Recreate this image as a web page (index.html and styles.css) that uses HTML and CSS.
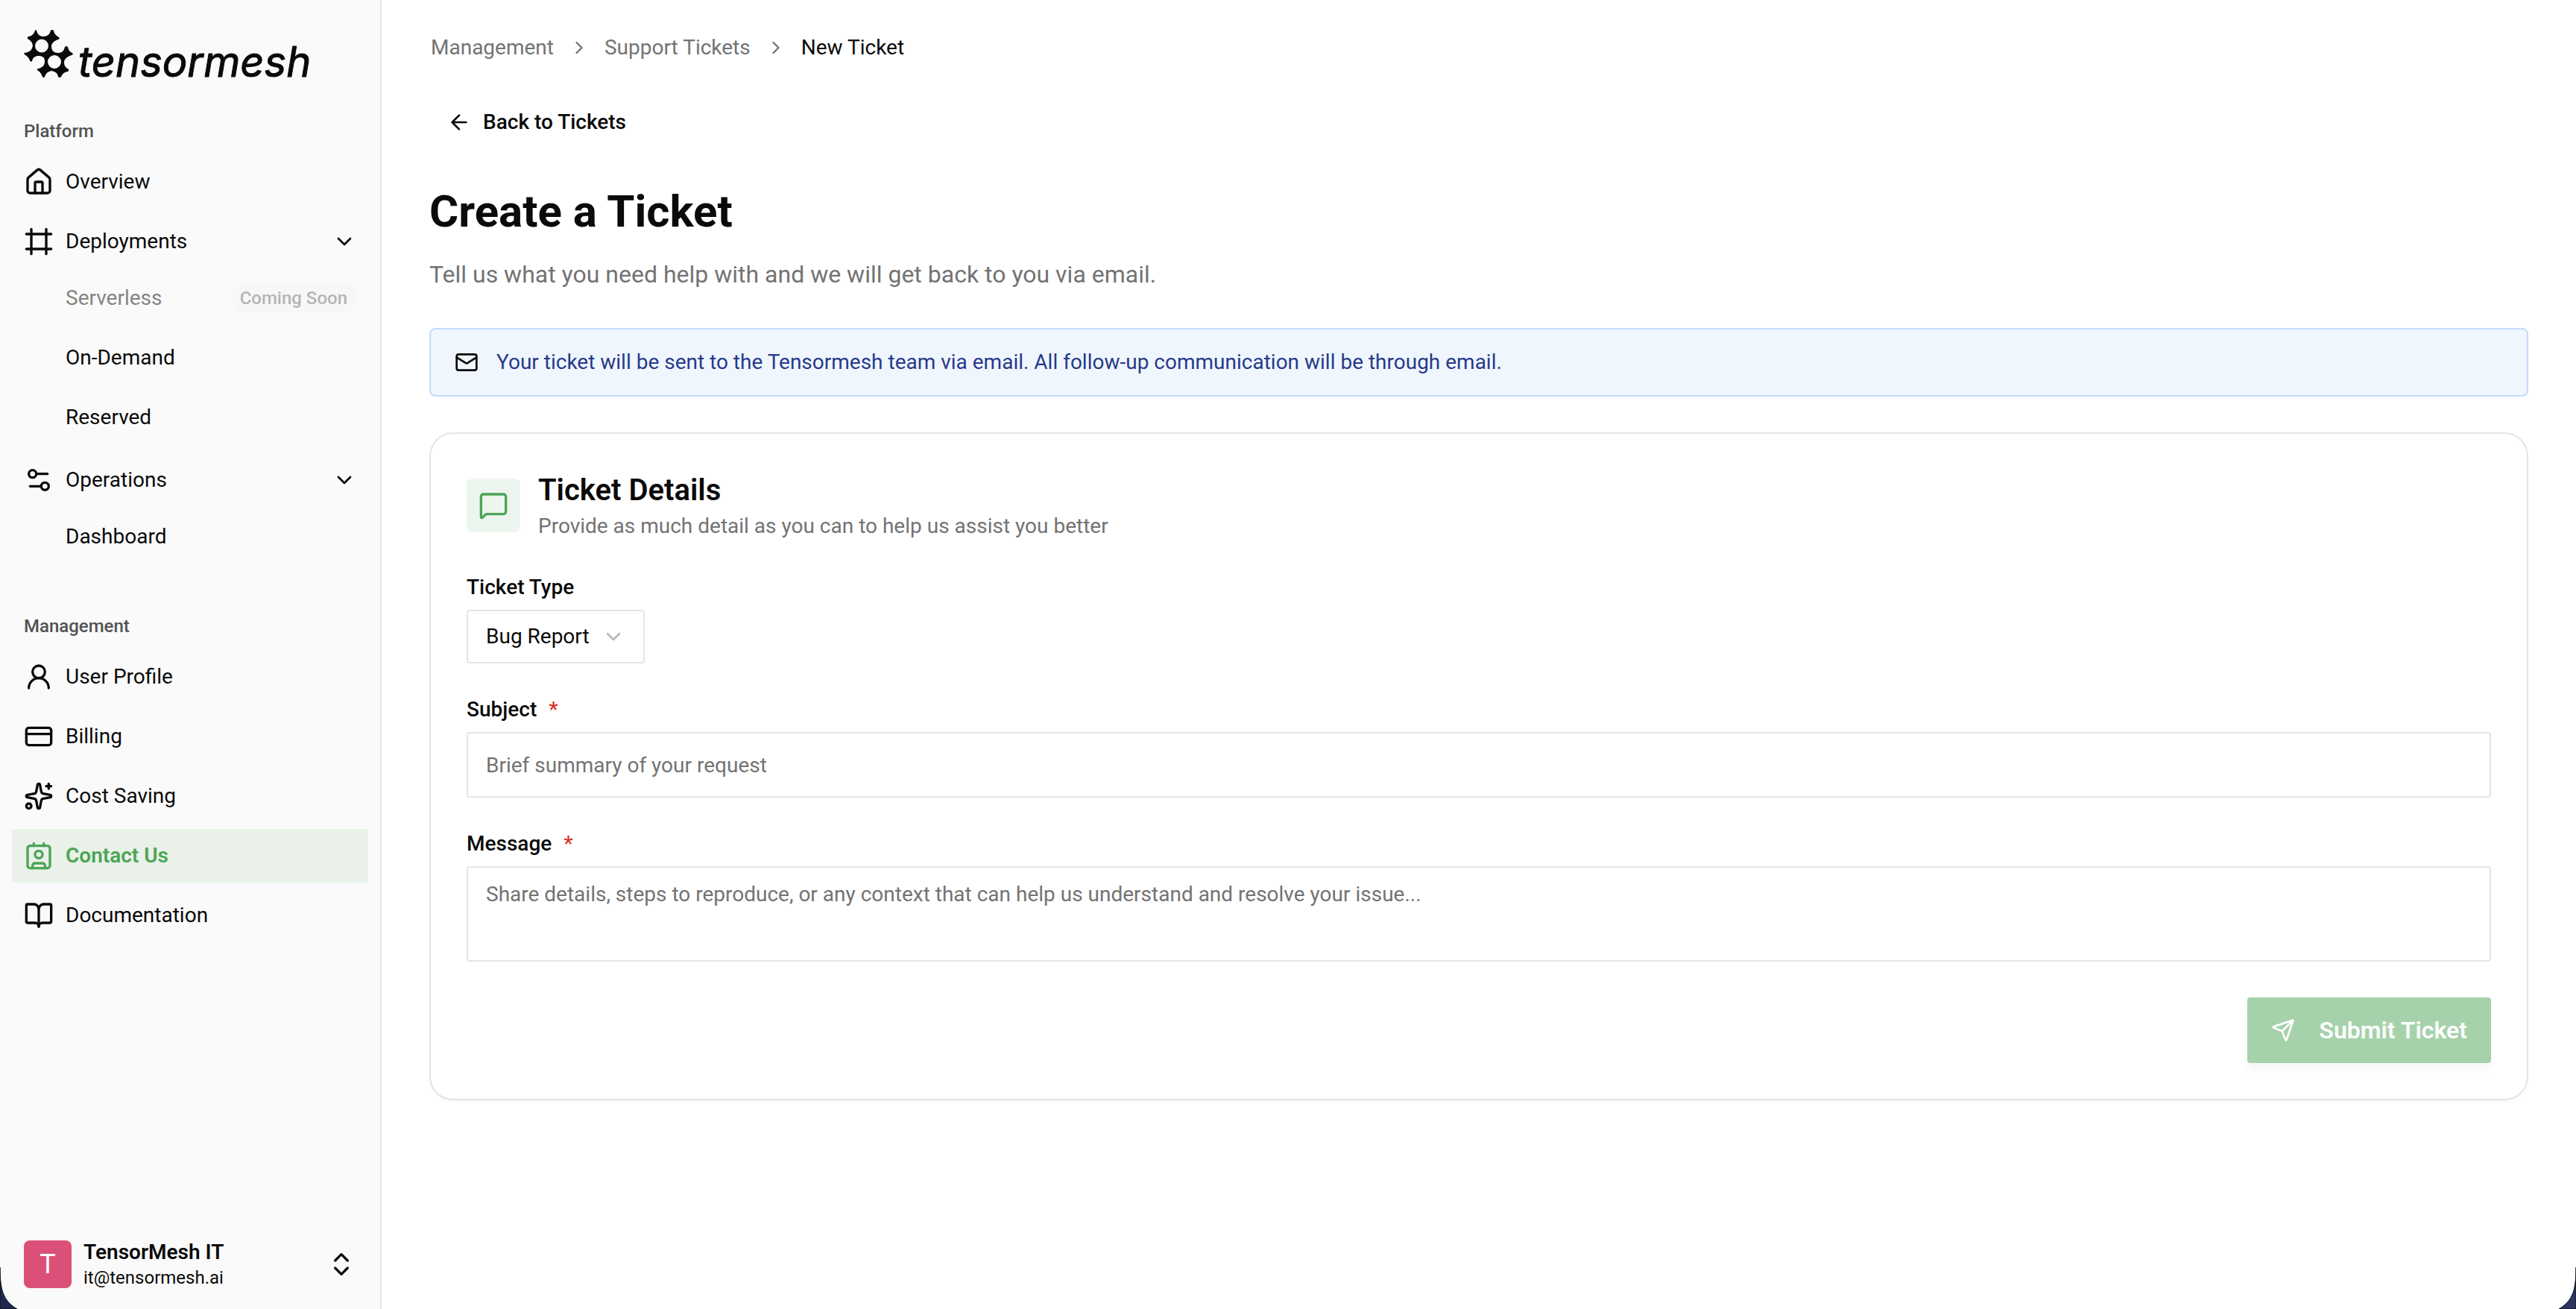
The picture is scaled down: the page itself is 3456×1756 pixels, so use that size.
FILE: index.html
```html
<!DOCTYPE html>
<html lang="en">
<head>
<meta charset="utf-8">
<meta name="viewport" content="width=device-width, initial-scale=1.0">
<title>New Ticket — Tensormesh</title>
<link rel="stylesheet" href="styles.css">
</head>
<body>
<div class="app">
  <aside class="sidebar">
    <a class="logo" href="#" aria-label="tensormesh">
      <svg viewBox="0 0 390 72" width="390" height="72">
        <path fill-rule="evenodd" d="M17 1Q19 9 26 9Q34 9 36 1Q38-1 40 1Q41 7 47 10Q49 12 46 13C40 15 37 18 37 23C37 28 41 31 46 31C51 31 54 28 55 23Q57 21 59 23Q60 29 65 31Q67 33 64 34C58 36 54 39 54 44Q54 50 60 53Q61 55 59 56Q52 57 50 63Q48 65 46 63Q45 56 37 55Q30 56 28 63Q26 65 25 63Q23 57 18 54Q17 52 20 52C26 50 28 47 28 42C28 37 25 35 20 35C15 35 12 37 11 42Q9 44 8 41Q6 36 1 33Q-1 32 1 31C8 30 11 27 12 21Q11 15 5 12Q4 10 6 9Q13 8 15 1Q16-1 17 1ZM24 12.500A9 9 0 1 0 24 30.500A9 9 0 1 0 24 12.500ZM41 34A9 9 0 1 0 41 52A9 9 0 1 0 41 34Z"/>
        <text class="wordmark" x="73" y="63">tensormesh</text>
      </svg>
    </a>

    <nav class="nav">
      <section class="nav-group">
        <h2 class="nav-label">Platform</h2>
        <a class="nav-item" href="#">
          <svg class="icon icon-lg" viewBox="0 0 24 24"><path d="M15 21v-8a1 1 0 0 0-1-1h-4a1 1 0 0 0-1 1v8"/><path d="M3 10a2 2 0 0 1 .709-1.528l7-5.999a2 2 0 0 1 2.582 0l7 5.999A2 2 0 0 1 21 10v9a2 2 0 0 1-2 2H5a2 2 0 0 1-2-2z"/></svg>
          Overview
        </a>
        <button class="nav-item" type="button">
          <svg class="icon icon-lg" viewBox="0 0 24 24"><path d="M22 6H2M22 18H2M6 2v20M18 2v20"/></svg>
          Deployments
          <svg class="icon icon-md push" viewBox="0 0 24 24"><path d="m6 9 6 6 6-6"/></svg>
        </button>
        <div class="nav-sub">
          <a class="nav-item disabled" aria-disabled="true">Serverless <span class="badge push">Coming Soon</span></a>
          <a class="nav-item" href="#">On-Demand</a>
          <a class="nav-item" href="#">Reserved</a>
        </div>
        <button class="nav-item" type="button">
          <svg class="icon icon-lg" viewBox="0 0 24 24"><path d="M14 17H5M19 7h-9"/><circle cx="17" cy="17" r="3"/><circle cx="7" cy="7" r="3"/></svg>
          Operations
          <svg class="icon icon-md push" viewBox="0 0 24 24"><path d="m6 9 6 6 6-6"/></svg>
        </button>
        <div class="nav-sub">
          <a class="nav-item" href="#">Dashboard</a>
        </div>
      </section>

      <section class="nav-group">
        <h2 class="nav-label">Management</h2>
        <a class="nav-item" href="#">
          <svg class="icon icon-lg" viewBox="0 0 24 24"><circle cx="12" cy="8" r="5"/><path d="M20 21a8 8 0 0 0-16 0"/></svg>
          User Profile
        </a>
        <a class="nav-item" href="#">
          <svg class="icon icon-lg" viewBox="0 0 24 24"><rect x="2" y="5" width="20" height="14" rx="2"/><path d="M2 10h20"/></svg>
          Billing
        </a>
        <a class="nav-item" href="#">
          <svg class="icon icon-lg" viewBox="0 0 24 24"><path d="M11.017 2.814a1 1 0 0 1 1.966 0l1.051 5.558a2 2 0 0 0 1.594 1.594l5.558 1.051a1 1 0 0 1 0 1.966l-5.558 1.051a2 2 0 0 0-1.594 1.594l-1.051 5.558a1 1 0 0 1-1.966 0l-1.051-5.558a2 2 0 0 0-1.594-1.594l-5.558-1.051a1 1 0 0 1 0-1.966l5.558-1.051a2 2 0 0 0 1.594-1.594z"/><path d="M20 2v4M22 4h-4"/><circle cx="4" cy="20" r="2"/></svg>
          Cost Saving
        </a>
        <a class="nav-item active" href="#" aria-current="page">
          <svg class="icon icon-lg" viewBox="0 0 24 24"><path d="M16 2v2M8 2v2"/><path d="M7 22v-2a2 2 0 0 1 2-2h6a2 2 0 0 1 2 2v2"/><circle cx="12" cy="11" r="3"/><rect x="3" y="4" width="18" height="18" rx="2"/></svg>
          Contact Us
        </a>
        <a class="nav-item" href="#">
          <svg class="icon icon-lg" viewBox="0 0 24 24"><path d="M12 7v14"/><path d="M3 18a1 1 0 0 1-1-1V4a1 1 0 0 1 1-1h5a4 4 0 0 1 4 4 4 4 0 0 1 4-4h5a1 1 0 0 1 1 1v13a1 1 0 0 1-1 1h-6a3 3 0 0 0-3 3 3 3 0 0 0-3-3z"/></svg>
          Documentation
        </a>
      </section>
    </nav>

    <button class="account" type="button">
      <span class="avatar">T</span>
      <span class="account-text">
        <span class="account-name">TensorMesh IT</span>
        <span class="account-email">it@tensormesh.ai</span>
      </span>
      <svg class="icon icon-lg push" viewBox="0 0 24 24"><path d="m7 15 5 5 5-5M7 9l5-5 5 5"/></svg>
    </button>
  </aside>

  <main class="main">
    <nav class="breadcrumb" aria-label="Breadcrumb">
      <a href="#">Management</a>
      <svg class="icon icon-sm" viewBox="0 0 24 24"><path d="m9 18 6-6-6-6"/></svg>
      <a href="#">Support Tickets</a>
      <svg class="icon icon-sm" viewBox="0 0 24 24"><path d="m9 18 6-6-6-6"/></svg>
      <span class="current" aria-current="page">New Ticket</span>
    </nav>

    <a class="back" href="#">
      <svg class="icon icon-md" viewBox="0 0 24 24"><path d="m12 19-7-7 7-7M19 12H5"/></svg>
      Back to Tickets
    </a>

    <h1 class="page-title">Create a Ticket</h1>
    <p class="page-subtitle">Tell us what you need help with and we will get back to you via email.</p>

    <div class="notice">
      <svg class="icon icon-md" viewBox="0 0 24 24"><rect x="2" y="4" width="20" height="16" rx="2"/><path d="m22 7-8.991 5.727a2 2 0 0 1-2.009 0L2 7"/></svg>
      <p>Your ticket will be sent to the Tensormesh team via email. All follow-up communication will be through email.</p>
    </div>

    <form class="card">
      <div class="card-header">
        <span class="card-icon">
          <svg class="icon icon-lg" viewBox="0 0 24 24"><path d="M22 17a2 2 0 0 1-2 2H6.828a2 2 0 0 0-1.414.586l-2.202 2.202A.71.71 0 0 1 2 21.286V5a2 2 0 0 1 2-2h16a2 2 0 0 1 2 2z"/></svg>
        </span>
        <div>
          <h2 class="card-title">Ticket Details</h2>
          <p class="card-desc">Provide as much detail as you can to help us assist you better</p>
        </div>
      </div>

      <div class="field">
        <label for="type">Ticket Type</label>
        <div class="select">
          <select id="type">
            <option selected>Bug Report</option>
          </select>
          <svg class="icon icon-md" viewBox="0 0 24 24"><path d="m6 9 6 6 6-6"/></svg>
        </div>
      </div>

      <div class="field">
        <label for="subject">Subject <span class="required">*</span></label>
        <input id="subject" type="text" placeholder="Brief summary of your request">
      </div>

      <div class="field">
        <label for="message">Message <span class="required">*</span></label>
        <textarea id="message" placeholder="Share details, steps to reproduce, or any context that can help us understand and resolve your issue..."></textarea>
      </div>

      <button class="submit" type="submit" disabled>
        <svg class="icon icon-md" viewBox="0 0 24 24"><path d="M14.536 21.686a.5.5 0 0 0 .937-.024l6.5-19a.496.496 0 0 0-.635-.635l-19 6.5a.5.5 0 0 0-.024.937l7.930 3.180a2 2 0 0 1 1.112 1.110z"/><path d="m21.854 2.147-10.940 10.939"/></svg>
        Submit Ticket
      </button>
    </form>
  </main>

  <svg class="corner corner-left" viewBox="0 0 24 56" width="24" height="56"><path d="M0 0C0 30 4 45 23 56H0z"/></svg>
  <svg class="corner corner-right" viewBox="0 0 24 56" width="24" height="56"><path d="M24 0C24 30 20 45 1 56H24z"/></svg>
</div>
</body>
</html>
```
FILE: styles.css
```css
:root {
  --text: #0a0a0a;
  --muted: #737373;
  --border: #e5e5e5;
  --green: #4ca555;
}
* {
  box-sizing: border-box;
}
body {
  margin: 0;
  font-family: Roboto, "Liberation Sans", sans-serif;
  font-size: 28px;
  line-height: 40px;
  color: var(--text);
  background: #fff;
}
h1, h2, p {
  margin: 0;
}
a {
  color: inherit;
  text-decoration: none;
}
button, input, select, textarea {
  font: inherit;
  color: inherit;
}
.app {
  position: relative;
  display: flex;
  min-height: 100vh;
}

/* icons */
.icon {
  flex: none;
  fill: none;
  stroke: currentColor;
  stroke-width: 2;
  stroke-linecap: round;
  stroke-linejoin: round;
}
.icon-sm { width: 28px; height: 28px; }
.icon-md { width: 32px; height: 32px; }
.icon-lg { width: 40px; height: 40px; }
.push { margin-left: auto; }

/* sidebar */
.sidebar {
  display: flex;
  flex: none;
  flex-direction: column;
  width: 512px;
  padding: 40px 16px 24px;
  background: #fafafa;
  border-right: 2px solid var(--border);
}
.logo {
  display: block;
  height: 104px;
  padding-left: 16px;
}
.logo svg {
  display: block;
  overflow: visible;
  fill: var(--text);
}
.wordmark {
  font-family: Inter, sans-serif;
  font-size: 56px;
  font-style: italic;
  stroke: var(--text);
  stroke-width: 1;
  stroke-linejoin: round;
}
.nav {
  display: flex;
  flex-direction: column;
  gap: 48px;
}
.nav-group {
  display: flex;
  flex-direction: column;
  gap: 8px;
}
.nav-label {
  height: 64px;
  margin-bottom: -8px;
  padding: 0 16px;
  font-size: 24px;
  font-weight: 500;
  line-height: 64px;
  color: #525252;
}
.nav-item {
  display: flex;
  align-items: center;
  gap: 16px;
  height: 72px;
  padding: 0 16px;
  border: 0;
  border-radius: 4px;
  background: none;
  text-align: left;
}
.nav-item.active {
  background: #e9f1e9;
  color: var(--green);
  font-weight: 600;
}
.nav-item.disabled {
  color: #848484;
}
.nav-sub {
  display: flex;
  flex-direction: column;
  gap: 8px;
  margin-top: -4px;
  padding-bottom: 4px;
}
.nav-sub .nav-item {
  padding-left: 72px;
}
.badge {
  padding: 0 12px;
  border-radius: 20px;
  background: #f7f7f7;
  font-size: 24px;
  font-weight: 500;
  color: #b5b5b5;
}
.account {
  display: flex;
  align-items: center;
  gap: 16px;
  height: 72px;
  margin-top: auto;
  padding: 0 16px;
  border: 0;
  background: none;
  text-align: left;
}
.avatar {
  width: 64px;
  height: 64px;
  border-radius: 8px;
  background: #db5079;
  color: #fff;
  font-size: 36px;
  line-height: 64px;
  text-align: center;
}
.account-text {
  display: flex;
  flex-direction: column;
}
.account-name {
  font-weight: 600;
  line-height: 36px;
}
.account-email {
  font-size: 24px;
  line-height: 32px;
}

/* main column */
.main {
  flex: 1;
  min-width: 0;
  padding: 44px 64px;
}
.breadcrumb {
  display: flex;
  align-items: center;
  gap: 20px;
  padding-left: 2px;
  color: var(--muted);
}
.breadcrumb .current {
  color: var(--text);
}
.back {
  display: flex;
  align-items: center;
  gap: 16px;
  width: fit-content;
  height: 72px;
  margin-top: 44px;
  padding: 0 24px;
  font-weight: 500;
}
.page-title {
  margin-top: 48px;
  font-size: 60px;
  font-weight: 700;
  line-height: 72px;
}
.page-subtitle {
  margin-top: 24px;
  font-size: 32px;
  line-height: 48px;
  color: var(--muted);
}
.notice {
  display: flex;
  align-items: center;
  gap: 24px;
  margin-top: 48px;
  padding: 24px 32px;
  border: 2px solid #c3dafc;
  border-radius: 8px;
  background: #f0f6fe;
}
.notice p {
  color: #263a8a;
}

/* ticket form */
.card {
  display: flex;
  flex-direction: column;
  gap: 48px;
  margin-top: 48px;
  padding: 48px;
  border: 2px solid var(--border);
  border-radius: 32px;
  box-shadow: 0 2px 4px rgba(0, 0, 0, 0.03);
}
.card-header {
  display: flex;
  align-items: center;
  gap: 24px;
}
.card-icon {
  display: flex;
  align-items: center;
  justify-content: center;
  width: 72px;
  height: 72px;
  border-radius: 8px;
  background: #edf6ee;
  color: var(--green);
}
.card-title {
  font-size: 40px;
  font-weight: 600;
  line-height: 56px;
}
.card-desc {
  color: var(--muted);
}
.field {
  display: flex;
  flex-direction: column;
  gap: 16px;
}
.field label {
  display: flex;
  gap: 16px;
  font-weight: 500;
  line-height: 28px;
}
.required {
  color: #d93025;
}
.field input, .field textarea, .field select {
  border: 2px solid var(--border);
  border-radius: 4px;
  background: transparent;
  outline: none;
}
.field input {
  height: 88px;
  padding: 0 24px;
}
.field textarea {
  height: 128px;
  padding: 16px 24px;
  resize: none;
}
.field ::placeholder {
  color: var(--muted);
  opacity: 1;
}
.select {
  position: relative;
  width: fit-content;
}
.select select {
  display: block;
  height: 72px;
  padding: 0 72px 0 24px;
  appearance: none;
}
.select .icon {
  position: absolute;
  top: 20px;
  right: 26px;
  color: #b9b9b9;
  pointer-events: none;
}
.submit {
  display: flex;
  align-items: center;
  align-self: flex-end;
  gap: 32px;
  height: 88px;
  padding: 0 32px;
  border: 0;
  border-radius: 4px;
  background: #a5d2aa;
  box-shadow: 0 8px 12px rgba(0, 0, 0, 0.04);
  color: #fff;
  font-size: 32px;
  font-weight: 600;
}

/* rounded window corners */
.corner {
  position: absolute;
  bottom: 0;
  fill: #202950;
  stroke: #0a0a14;
  stroke-width: 1;
}
.corner-left { left: 0; }
.corner-right {
  right: 0;
  fill: #2b3560;
}
```
